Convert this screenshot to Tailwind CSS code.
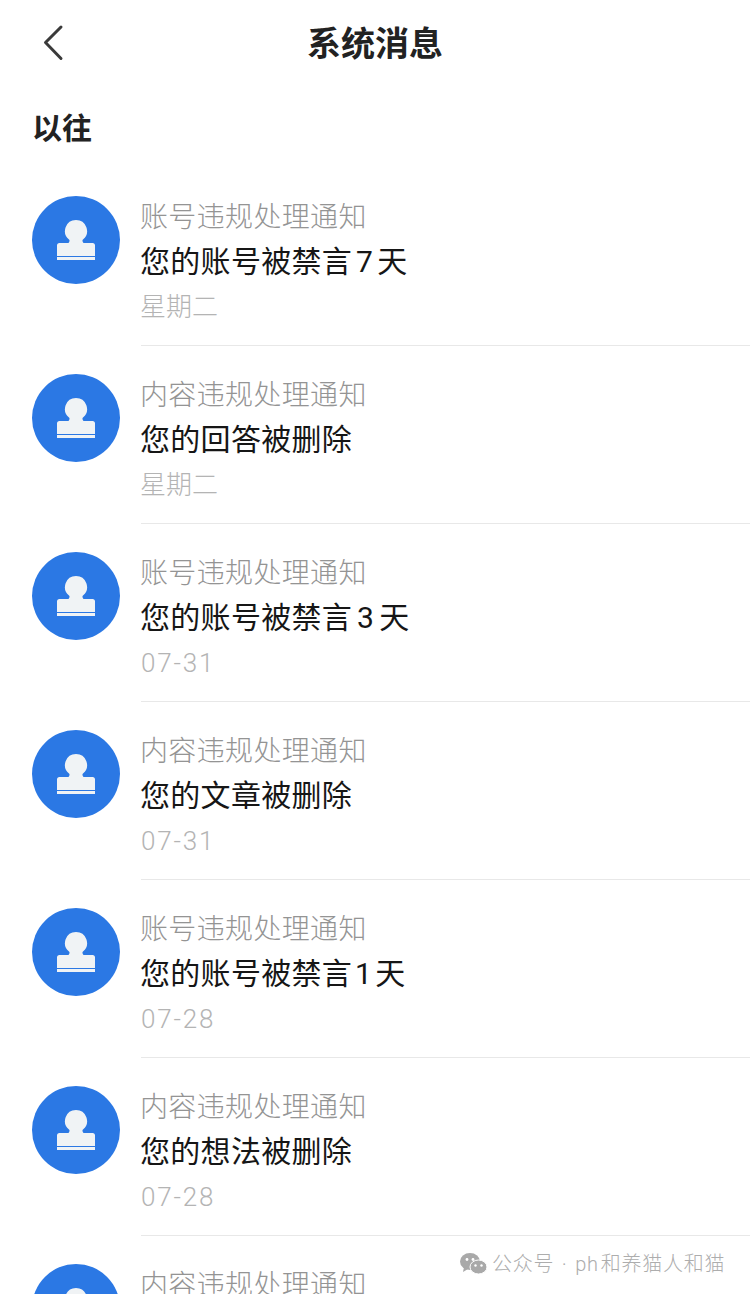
<!DOCTYPE html>
<html lang="zh-CN">
<head>
<meta charset="utf-8">
<title>系统消息</title>
<script src="https://cdn.jsdelivr.net/npm/@tailwindcss/browser@4"></script>
</head>
<body class="bg-white">
<div class="relative w-[750px] h-[1294px] overflow-hidden bg-white font-['Roboto','Noto_Sans_CJK_SC',sans-serif]">

    <!-- header -->
    <header class="relative flex items-center justify-center h-[88px]">
        <svg class="absolute left-[42px] top-[24px] w-[24px] h-[38px]" viewBox="0 0 24 38" fill="none" stroke="#3a3a3a" stroke-width="3" stroke-linecap="round" stroke-linejoin="round">
            <path d="M19 3 L3.5 18.5 L19 34.5"/>
        </svg>
        <h1 class="text-[34px] leading-[44px] font-semibold text-[#222222]">系统消息</h1>
    </header>

    <h2 class="pl-[32px] pt-[19px] h-[80px] text-[30px] leading-[44px] font-semibold text-[#222222]">以往</h2>

    <ul>
        <li class="flex h-[178px] pl-[32px]">
            <div class="flex items-center justify-center w-[88px] h-[88px] mt-[28px] rounded-full bg-[#2b78e4] shrink-0">
                <svg class="w-[38px] h-[40px]" viewBox="0 0 38 40" fill="#f0f3f5"><path d="M19 0a11 11 0 0 1 7 19.5c-.8.8-.8 2 .5 3.5h9a2.5 2.5 0 0 1 2.5 2.5V36H0V25.5A2.5 2.5 0 0 1 2.500 23h9c1.300-1.500 1.300-2.700.5-3.500A11 11 0 0 1 19 0z"/><rect y="37" width="38" height="3"/></svg>
            </div>
            <div class="flex-1 ml-[21px] pt-[30px] border-b border-[#e8e8e8]">
                <p class="-ml-px text-[28px] leading-[40px] tracking-[0.35px] text-[#949494] font-light">账号违规处理通知</p>
                <p class="-ml-px mt-[1px] text-[30px] leading-[46px] tracking-[0.3px] text-[#161616] font-normal">您的账号被禁言<span class="mx-[4px]">7</span>天</p>
                <p class="-ml-px mt-[-1px] text-[26px] leading-[46px] text-[#b4b4b4] font-light">星期二</p>
            </div>
        </li>
        <li class="flex h-[178px] pl-[32px]">
            <div class="flex items-center justify-center w-[88px] h-[88px] mt-[28px] rounded-full bg-[#2b78e4] shrink-0">
                <svg class="w-[38px] h-[40px]" viewBox="0 0 38 40" fill="#f0f3f5"><path d="M19 0a11 11 0 0 1 7 19.5c-.8.8-.8 2 .5 3.5h9a2.5 2.5 0 0 1 2.5 2.5V36H0V25.5A2.5 2.5 0 0 1 2.500 23h9c1.300-1.500 1.300-2.700.5-3.500A11 11 0 0 1 19 0z"/><rect y="37" width="38" height="3"/></svg>
            </div>
            <div class="flex-1 ml-[21px] pt-[30px] border-b border-[#e8e8e8]">
                <p class="-ml-px text-[28px] leading-[40px] tracking-[0.35px] text-[#949494] font-light">内容违规处理通知</p>
                <p class="-ml-px mt-[1px] text-[30px] leading-[46px] tracking-[0.3px] text-[#161616] font-normal">您的回答被删除</p>
                <p class="-ml-px mt-[-1px] text-[26px] leading-[46px] text-[#b4b4b4] font-light">星期二</p>
            </div>
        </li>
        <li class="flex h-[178px] pl-[32px]">
            <div class="flex items-center justify-center w-[88px] h-[88px] mt-[28px] rounded-full bg-[#2b78e4] shrink-0">
                <svg class="w-[38px] h-[40px]" viewBox="0 0 38 40" fill="#f0f3f5"><path d="M19 0a11 11 0 0 1 7 19.5c-.8.8-.8 2 .5 3.5h9a2.5 2.5 0 0 1 2.5 2.5V36H0V25.5A2.5 2.5 0 0 1 2.500 23h9c1.300-1.500 1.300-2.700.5-3.500A11 11 0 0 1 19 0z"/><rect y="37" width="38" height="3"/></svg>
            </div>
            <div class="flex-1 ml-[21px] pt-[30px] border-b border-[#e8e8e8]">
                <p class="-ml-px text-[28px] leading-[40px] tracking-[0.35px] text-[#949494] font-light">账号违规处理通知</p>
                <p class="-ml-px mt-[1px] text-[30px] leading-[46px] tracking-[0.3px] text-[#161616] font-normal">您的账号被禁言<span class="mx-[5px]">3</span>天</p>
                <p class="mt-[-1px] text-[26px] leading-[46px] tracking-[1.8px] text-[#b4b4b4] font-light">07-31</p>
            </div>
        </li>
        <li class="flex h-[178px] pl-[32px]">
            <div class="flex items-center justify-center w-[88px] h-[88px] mt-[28px] rounded-full bg-[#2b78e4] shrink-0">
                <svg class="w-[38px] h-[40px]" viewBox="0 0 38 40" fill="#f0f3f5"><path d="M19 0a11 11 0 0 1 7 19.5c-.8.8-.8 2 .5 3.5h9a2.5 2.5 0 0 1 2.5 2.5V36H0V25.5A2.5 2.5 0 0 1 2.500 23h9c1.300-1.500 1.300-2.700.5-3.500A11 11 0 0 1 19 0z"/><rect y="37" width="38" height="3"/></svg>
            </div>
            <div class="flex-1 ml-[21px] pt-[30px] border-b border-[#e8e8e8]">
                <p class="-ml-px text-[28px] leading-[40px] tracking-[0.35px] text-[#949494] font-light">内容违规处理通知</p>
                <p class="-ml-px mt-[1px] text-[30px] leading-[46px] tracking-[0.3px] text-[#161616] font-normal">您的文章被删除</p>
                <p class="mt-[-1px] text-[26px] leading-[46px] tracking-[1.8px] text-[#b4b4b4] font-light">07-31</p>
            </div>
        </li>
        <li class="flex h-[178px] pl-[32px]">
            <div class="flex items-center justify-center w-[88px] h-[88px] mt-[28px] rounded-full bg-[#2b78e4] shrink-0">
                <svg class="w-[38px] h-[40px]" viewBox="0 0 38 40" fill="#f0f3f5"><path d="M19 0a11 11 0 0 1 7 19.5c-.8.8-.8 2 .5 3.5h9a2.5 2.5 0 0 1 2.5 2.5V36H0V25.5A2.5 2.5 0 0 1 2.500 23h9c1.300-1.500 1.300-2.700.5-3.500A11 11 0 0 1 19 0z"/><rect y="37" width="38" height="3"/></svg>
            </div>
            <div class="flex-1 ml-[21px] pt-[30px] border-b border-[#e8e8e8]">
                <p class="-ml-px text-[28px] leading-[40px] tracking-[0.35px] text-[#949494] font-light">账号违规处理通知</p>
                <p class="-ml-px mt-[1px] text-[30px] leading-[46px] tracking-[0.3px] text-[#161616] font-normal">您的账号被禁言<span class="mx-[3px]">1</span>天</p>
                <p class="mt-[-1px] text-[26px] leading-[46px] tracking-[1.8px] text-[#b4b4b4] font-light">07-28</p>
            </div>
        </li>
        <li class="flex h-[178px] pl-[32px]">
            <div class="flex items-center justify-center w-[88px] h-[88px] mt-[28px] rounded-full bg-[#2b78e4] shrink-0">
                <svg class="w-[38px] h-[40px]" viewBox="0 0 38 40" fill="#f0f3f5"><path d="M19 0a11 11 0 0 1 7 19.5c-.8.8-.8 2 .5 3.5h9a2.5 2.5 0 0 1 2.5 2.5V36H0V25.5A2.5 2.5 0 0 1 2.500 23h9c1.300-1.500 1.300-2.700.5-3.500A11 11 0 0 1 19 0z"/><rect y="37" width="38" height="3"/></svg>
            </div>
            <div class="flex-1 ml-[21px] pt-[30px] border-b border-[#e8e8e8]">
                <p class="-ml-px text-[28px] leading-[40px] tracking-[0.35px] text-[#949494] font-light">内容违规处理通知</p>
                <p class="-ml-px mt-[1px] text-[30px] leading-[46px] tracking-[0.3px] text-[#161616] font-normal">您的想法被删除</p>
                <p class="mt-[-1px] text-[26px] leading-[46px] tracking-[1.8px] text-[#b4b4b4] font-light">07-28</p>
            </div>
        </li>
        <li class="flex h-[178px] pl-[32px]">
            <div class="flex items-center justify-center w-[88px] h-[88px] mt-[28px] rounded-full bg-[#2b78e4] shrink-0">
                <svg class="w-[38px] h-[40px]" viewBox="0 0 38 40" fill="#f0f3f5"><path d="M19 0a11 11 0 0 1 7 19.5c-.8.8-.8 2 .5 3.5h9a2.5 2.5 0 0 1 2.5 2.5V36H0V25.5A2.5 2.5 0 0 1 2.500 23h9c1.300-1.500 1.300-2.700.5-3.500A11 11 0 0 1 19 0z"/><rect y="37" width="38" height="3"/></svg>
            </div>
            <div class="flex-1 ml-[21px] pt-[30px]">
                <p class="-ml-px text-[28px] leading-[40px] tracking-[0.35px] text-[#949494] font-light">内容违规处理通知</p>
            </div>
        </li>
    </ul>

    <!-- watermark -->
    <div class="absolute left-[460px] top-[1250px] flex items-center h-[28px]">
        <svg class="w-[27px] h-[22px]" viewBox="0 0 27 22" fill="#a9a9a9">
            <ellipse cx="10" cy="8.5" rx="10" ry="8.5"/>
            <path d="M4 14l-1 5 5-3z"/>
            <ellipse cx="18.5" cy="14" rx="8.5" ry="7" stroke="#ffffff" stroke-width="1"/>
            <circle cx="7" cy="6.5" r="1.4" fill="#ffffff"/><circle cx="13" cy="6.5" r="1.4" fill="#ffffff"/>
            <circle cx="15.5" cy="12.5" r="1.2" fill="#ffffff"/><circle cx="21.5" cy="12.5" r="1.2" fill="#ffffff"/>
        </svg>
        <span class="ml-[5px] text-[20px] leading-[28px] tracking-[0.75px] [word-spacing:2px] text-[#adadad] font-light whitespace-nowrap">公众号 · <span class="mr-[2px]">ph</span>和养猫人和猫</span>
    </div>
</div>
</body>
</html>
